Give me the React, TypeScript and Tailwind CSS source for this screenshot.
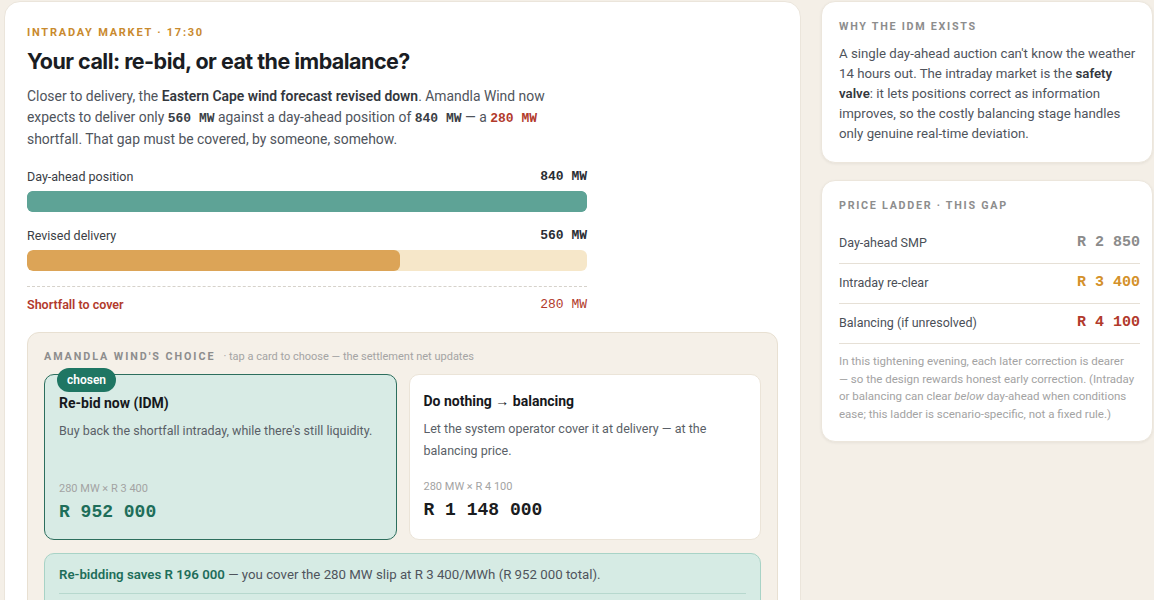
import { useState } from 'react';

const sans = "font-['Roboto','Noto_Sans',sans-serif]";
const mono = "font-['Liberation_Mono','DejaVu_Sans_Mono',monospace]";

type Choice = 'rebid' | 'balance';

const MW_SHORT = 280;
const PRICES = { dayAhead: 2850, intraday: 3400, balancing: 4100 };

// "R 952 000" style rand formatting
const rand = (n: number) => 'R ' + n.toLocaleString('en-US').replace(/,/g, ' ');

function PositionBar({
  label,
  value,
  pct,
  fill,
  track,
}: {
  label: string;
  value: string;
  pct: number;
  fill: string;
  track: string;
}) {
  return (
    <div>
      <div className="flex items-center justify-between h-[18px] text-[12.5px] text-[#3a3e45]">
        <span>{label}</span>
        <span className={`${mono} font-bold text-[13px] text-[#2a2d33]`}>{value}</span>
      </div>
      <div className={`mt-[5px] h-[21px] rounded-[6px] overflow-hidden ${track}`}>
        <div className={`h-full rounded-[6px] ${fill}`} style={{ width: `${pct}%` }} />
      </div>
    </div>
  );
}

function ChoiceCard({
  chosen,
  title,
  desc,
  formula,
  total,
  onPick,
}: {
  chosen: boolean;
  title: string;
  desc: string;
  formula: string;
  total: string;
  onPick: () => void;
}) {
  return (
    <button
      type="button"
      onClick={onPick}
      className={`relative flex flex-col text-left rounded-[10px] border px-[14px] ${
        chosen
          ? 'bg-[#d8ebe5] border-[#2c6e5d] pt-[18px] pb-[15px]'
          : 'bg-white border-[#ebe4d8] pt-4 pb-[17px]'
      }`}
    >
      {chosen && (
        <span className="absolute -top-[7px] left-3 h-6 px-[10px] flex items-center rounded-full bg-[#1f7663] text-white text-[12px] font-semibold">
          chosen
        </span>
      )}
      <h3 className="text-[14px] leading-5 font-bold text-[#16181c]">{title}</h3>
      <p className="mt-[7px] text-[12.5px] leading-[22px] text-[#5a5f67]">{desc}</p>
      <div className="mt-auto pt-[17px]">
        <div className="text-[11px] leading-4 text-[#a3a3a3]">{formula}</div>
        <div
          className={`${mono} mt-[3px] text-[18px] leading-6 font-bold ${
            chosen ? 'text-[#1e6e5a]' : 'text-[#1a1c20]'
          }`}
        >
          {total}
        </div>
      </div>
    </button>
  );
}

function LadderRow({ label, price, tone }: { label: string; price: number; tone: string }) {
  return (
    <div className="flex items-center justify-between h-10 border-b border-[#e6e0d6]">
      <span className="text-[12.5px] text-[#4a4f57]">{label}</span>
      <span className={`${mono} text-[15px] font-bold ${tone}`}>{rand(price)}</span>
    </div>
  );
}

export default function App() {
  const [choice, setChoice] = useState<Choice>('rebid');

  const rebidCost = MW_SHORT * PRICES.intraday;
  const balanceCost = MW_SHORT * PRICES.balancing;
  const saving = balanceCost - rebidCost;

  return (
    <div className={`min-h-screen bg-[#f4efe7] pl-1 pt-px ${sans}`}>
      <div className="grid grid-cols-[797px_332px] gap-5">
        {/* Main scenario card */}
        <section className="bg-white rounded-2xl border border-[#ebe5db] px-[22px] pt-6 pb-8">
          <div className="text-[11px] leading-[14px] font-bold tracking-[0.16em] text-[#c98a2e]">
            INTRADAY MARKET · 17:30
          </div>
          <h1 className="mt-[7px] font-['Inter',sans-serif] text-[21.5px] leading-7 font-bold tracking-[-0.025em] text-[#1a1d23]">
            Your call: re-bid, or eat the imbalance?
          </h1>
          <p className="mt-[11px] max-w-[540px] text-[13.9px] leading-[21px] text-[#4f545c]">
            Closer to delivery, the{' '}
            <b className="font-semibold text-[#33373d]">Eastern Cape wind forecast revised down</b>.
            Amandla Wind now expects to deliver only{' '}
            <b className={`${mono} text-[13px] font-bold text-[#3a3e45]`}>560 MW</b> against a
            day-ahead position of{' '}
            <b className={`${mono} text-[13px] font-bold text-[#3a3e45]`}>840 MW</b> — a{' '}
            <b className={`${mono} text-[13px] font-bold text-[#b23a2c]`}>280 MW</b> shortfall. That
            gap must be covered, by someone, somehow.
          </p>

          {/* Position vs delivery */}
          <div className="mt-[18px] w-[560px]">
            <PositionBar
              label="Day-ahead position"
              value="840 MW"
              pct={100}
              fill="bg-[#5ea396]"
              track="bg-[#5ea396]"
            />
            <div className="mt-[15px]">
              <PositionBar
                label="Revised delivery"
                value="560 MW"
                pct={(560 / 840) * 100}
                fill="bg-[#dca457]"
                track="bg-[#f6e7c9]"
              />
            </div>
            <div className="mt-[15px] border-t border-dashed border-[#d6d2cb]" />
            <div className="mt-[9px] flex items-center justify-between h-[18px] text-[12.5px] font-semibold text-[#b23a2c]">
              <span>Shortfall to cover</span>
              <span className={`${mono} text-[13px] font-normal`}>280 MW</span>
            </div>
          </div>

          {/* Decision panel */}
          <div className="mt-[18px] w-[751px] rounded-xl border border-[#e8e0d2] bg-[#f5f0e8] px-4 pt-4 pb-4">
            <div className="flex items-baseline gap-2 h-4">
              <span className="text-[10.75px] font-bold tracking-[0.18em] text-[#8d8d8d]">
                AMANDLA WIND'S CHOICE
              </span>
              <span className="text-[11px] text-[#a4a4a4]">
                · tap a card to choose — the settlement net updates
              </span>
            </div>
            <div className="mt-[9px] grid grid-cols-2 gap-3">
              <ChoiceCard
                chosen={choice === 'rebid'}
                title="Re-bid now (IDM)"
                desc="Buy back the shortfall intraday, while there's still liquidity."
                formula={`280 MW × ${rand(PRICES.intraday)}`}
                total={rand(rebidCost)}
                onPick={() => setChoice('rebid')}
              />
              <ChoiceCard
                chosen={choice === 'balance'}
                title="Do nothing → balancing"
                desc="Let the system operator cover it at delivery — at the balancing price."
                formula={`280 MW × ${rand(PRICES.balancing)}`}
                total={rand(balanceCost)}
                onPick={() => setChoice('balance')}
              />
            </div>
            <div className="mt-[13px] rounded-[10px] border border-[#a8d3c6] bg-[#d6ebe4] px-[14px] pt-[11px] pb-3">
              <p className="text-[13.25px] leading-5 text-[#4f545c]">
                <b className="font-semibold text-[#1e6e5a]">Re-bidding saves {rand(saving)}</b> — you
                cover the 280 MW slip at R 3 400/MWh ({rand(rebidCost)} total).
              </p>
              <div className="mt-[8px] border-t border-[#b7d8ce]" />
              <div className="mt-3 flex items-center justify-between text-[12.5px] text-[#4f545c]">
                <span>Settlement net</span>
                <span className={`${mono} font-bold text-[#1e6e5a]`}>−{rand(rebidCost)}</span>
              </div>
            </div>
          </div>
        </section>

        {/* Side notes */}
        <aside className="flex flex-col gap-[17px]">
          <div className="bg-white rounded-[14px] border border-[#ece6dc] shadow-[0_1px_3px_rgba(0,0,0,0.06)] pl-[17px] pr-3 pt-[18px] pb-[18px]">
            <div className="text-[10.75px] leading-[14px] font-bold tracking-[0.16em] text-[#8d8d8d]">
              WHY THE IDM EXISTS
            </div>
            <p className="mt-[10px] text-[13.25px] leading-5 text-[#4f545c]">
              A single day-ahead auction can't know the weather 14 hours out. The intraday market is
              the <b className="font-semibold text-[#33373d]">safety valve</b>: it lets positions
              correct as information improves, so the costly balancing stage handles only genuine
              real-time deviation.
            </p>
          </div>

          <div className="bg-white rounded-[14px] border border-[#ece6dc] shadow-[0_1px_3px_rgba(0,0,0,0.06)] pl-[17px] pr-3 pt-[18px] pb-[18px]">
            <div className="text-[10.75px] leading-[14px] font-bold tracking-[0.16em] text-[#8d8d8d]">
              PRICE LADDER · THIS GAP
            </div>
            <div className="mt-[11px]">
              <LadderRow label="Day-ahead SMP" price={PRICES.dayAhead} tone="text-[#8b8b8b]" />
              <LadderRow label="Intraday re-clear" price={PRICES.intraday} tone="text-[#d4912a]" />
              <LadderRow
                label="Balancing (if unresolved)"
                price={PRICES.balancing}
                tone="text-[#b23a2c]"
              />
            </div>
            <p className="mt-[9px] text-[11.5px] leading-[17.5px] text-[#a3a3a3]">
              In this tightening evening, each later correction is dearer
              <br />— so the design rewards honest early correction. (Intraday or balancing can
              clear <i>below</i> day-ahead when conditions ease; this ladder is scenario-specific,
              not a fixed rule.)
            </p>
          </div>
        </aside>
      </div>
    </div>
  );
}
